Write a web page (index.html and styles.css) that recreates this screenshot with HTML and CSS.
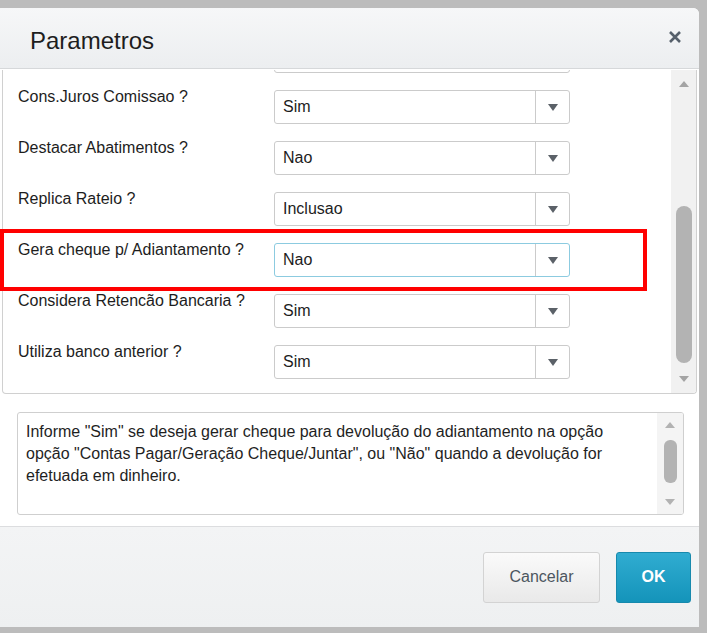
FILE: index.html
```html
<!DOCTYPE html>
<html lang="pt-BR">
<head>
<meta charset="utf-8">
<title>Parametros</title>
<link rel="stylesheet" href="styles.css">
</head>
<body>
<div class="dialog">
  <header class="dlg-head">
    <h1 class="dlg-title">Parametros</h1>
    <button class="dlg-close" type="button" aria-label="Fechar">
      <svg width="14" height="14" viewBox="0 0 14 14"><path d="M2 2 L12 12 M12 2 L2 12" stroke="#56606b" stroke-width="2.6" stroke-linecap="butt" fill="none"/></svg>
    </button>
  </header>

  <div class="dlg-body">
    <div class="param-panel">
      <div class="param-list">
        <!-- row scrolled above the visible area: only its box edge shows -->
        <div class="param-row param-row--scrolled">
          <span class="param-label"></span>
          <div class="combo"><span class="combo-value"></span></div>
        </div>
        <div class="param-row">
          <span class="param-label">Cons.Juros Comissao ?</span>
          <div class="combo"><span class="combo-value">Sim</span><span class="combo-btn"></span></div>
        </div>
        <div class="param-row">
          <span class="param-label">Destacar Abatimentos ?</span>
          <div class="combo"><span class="combo-value">Nao</span><span class="combo-btn"></span></div>
        </div>
        <div class="param-row">
          <span class="param-label">Replica Rateio ?</span>
          <div class="combo"><span class="combo-value">Inclusao</span><span class="combo-btn"></span></div>
        </div>
        <div class="param-row">
          <span class="param-label">Gera cheque p/ Adiantamento ?</span>
          <div class="combo combo--focus"><span class="combo-value">Nao</span><span class="combo-btn"></span></div>
        </div>
        <div class="param-row">
          <span class="param-label">Considera Retencão Bancaria ?</span>
          <div class="combo"><span class="combo-value">Sim</span><span class="combo-btn"></span></div>
        </div>
        <div class="param-row">
          <span class="param-label">Utiliza banco anterior ?</span>
          <div class="combo"><span class="combo-value">Sim</span><span class="combo-btn"></span></div>
        </div>
      </div>
      <div class="vscroll">
        <span class="vs-arrow vs-up"></span>
        <span class="vs-fill"></span>
        <span class="vs-thumb"></span>
        <span class="vs-arrow vs-down"></span>
      </div>
    </div>

    <div class="help-box">
      <p class="help-text">Informe "Sim" se deseja gerar cheque para devolução do adiantamento na opção opção "Contas Pagar/Geração Cheque/Juntar", ou "Não" quando a devolução for efetuada em dinheiro.</p>
      <div class="vscroll vscroll--help">
        <span class="vs-arrow vs-up"></span>
        <span class="vs-thumb"></span>
        <span class="vs-fill"></span>
        <span class="vs-arrow vs-down"></span>
      </div>
    </div>
  </div>

  <footer class="dlg-foot">
    <button class="btn btn-cancel" type="button">Cancelar</button>
    <button class="btn btn-ok" type="button">OK</button>
  </footer>
</div>

<div class="callout"></div>
</body>
</html>
```
FILE: styles.css
```css
* { box-sizing: border-box; }

body {
  margin: 0;
  width: 707px;
  height: 633px;
  overflow: hidden;
  position: relative;
  background: #bcbcbc;
  font-family: "Liberation Sans", Arial, sans-serif;
  color: #1d1d1d;
}

/* dialog shell */
.dialog {
  margin-top: 8px;
  width: 699px;
  height: 619px;
  background: #fff;
  border-top-right-radius: 6px;
  display: flex;
  flex-direction: column;
  overflow: hidden;
}

.dlg-head {
  flex: none;
  height: 61px;
  display: flex;
  align-items: flex-start;
  justify-content: space-between;
  padding: 0 17px 0 30px;
  background: linear-gradient(#f6f7f8, #eceef0);
  border-bottom: 1px solid #d6d8da;
}

.dlg-title {
  margin: 19px 0 0;
  font-size: 24px;
  line-height: 28px;
  font-weight: normal;
  color: #1e1e1e;
}

.dlg-close {
  margin-top: 22px;
  width: 14px;
  height: 14px;
  padding: 0;
  border: 0;
  background: none;
  display: flex;
}

.dlg-body {
  flex: 1;
  display: flex;
  flex-direction: column;
  padding: 1px 2px 0 2px;
}

/* parameter list */
.param-panel {
  flex: none;
  height: 324px;
  display: flex;
  border: 1px solid #d0d0d0;
  border-top: 0;
  border-radius: 0 0 4px 4px;
  overflow: hidden;
}

.param-list {
  flex: 1;
  display: flex;
  flex-direction: column;
  gap: 17px;
  margin-top: -31px;
  padding-left: 15px;
}

.param-row {
  display: grid;
  grid-template-columns: 256px 296px;
  height: 34px;
  flex: none;
}

.param-label {
  margin-top: -2px;
  font-size: 16px;
  line-height: 18px;
  white-space: nowrap;
}

.combo {
  height: 34px;
  display: flex;
  border: 1px solid #cbcbcb;
  border-radius: 3px;
  background: #fff;
}

.combo--focus {
  border-color: #8ccbe0;
}

.combo-value {
  flex: 1;
  padding-left: 8px;
  font-size: 16px;
  line-height: 32px;
}

.combo-btn {
  width: 34px;
  border-left: 1px solid #cbcbcb;
  display: flex;
  align-items: center;
  justify-content: center;
}

.combo-btn::after {
  content: "";
  border-left: 5px solid transparent;
  border-right: 5px solid transparent;
  border-top: 7px solid #5b6168;
}

/* scrollbars */
.vscroll {
  flex: none;
  width: 25px;
  display: flex;
  flex-direction: column;
  align-items: center;
  background: #f1f1f1;
}

.vs-arrow {
  flex: none;
  height: 28px;
  width: 100%;
  display: flex;
  align-items: center;
  justify-content: center;
}

.vs-up::after,
.vs-down::after {
  content: "";
  border-left: 5px solid transparent;
  border-right: 5px solid transparent;
}

.vs-up::after { border-bottom: 6px solid #a4a4a4; }
.vs-down::after { border-top: 6px solid #a4a4a4; }

.vs-fill { flex: 1; }

.vs-thumb {
  flex: none;
  width: 16px;
  height: 157px;
  margin-bottom: 2px;
  border-radius: 8px;
  background: #b3b3b3;
}

.vscroll--help {
  width: 26px;
  background: #f4f4f4;
}

.vscroll--help .vs-arrow { height: 24px; }

.vscroll--help .vs-up::after { border-bottom-color: #b2b2b2; }
.vscroll--help .vs-down::after { border-top-color: #b2b2b2; }

.vscroll--help .vs-thumb {
  width: 13px;
  height: 43px;
  margin: 3px 0 0;
  border-radius: 6px;
}

/* help text */
.help-box {
  flex: none;
  margin: 18px 0 0 15px;
  width: 667px;
  height: 103px;
  display: flex;
  border: 1px solid #cfcfcf;
  border-radius: 3px;
  overflow: hidden;
}

.help-text {
  flex: 1;
  margin: 0;
  padding: 8px 12px 0 8px;
  font-size: 16px;
  line-height: 22px;
  color: #1f1f1f;
}

/* footer buttons */
.dlg-foot {
  flex: none;
  height: 101px;
  display: flex;
  align-items: center;
  justify-content: flex-end;
  gap: 16px;
  padding-right: 8px;
  border-top: 1px solid #dcdddf;
  background: linear-gradient(#f3f4f5, #eef0f1);
}

.btn {
  height: 51px;
  border-radius: 3px;
  font-family: inherit;
  font-size: 16px;
  padding: 0;
}

.btn-cancel {
  width: 117px;
  border: 1px solid #d3d3d3;
  background: linear-gradient(#fafafa, #e9e9e9);
  color: #4c5660;
}

.btn-ok {
  width: 75px;
  border: 1px solid #1689ad;
  background: linear-gradient(#30acd1, #1494ba);
  color: #fff;
  font-weight: bold;
}

/* red highlight drawn over the focused row */
.callout {
  position: absolute;
  left: 0;
  top: 229px;
  width: 647px;
  height: 62px;
  border: 4px solid #ff0000;
}
```
